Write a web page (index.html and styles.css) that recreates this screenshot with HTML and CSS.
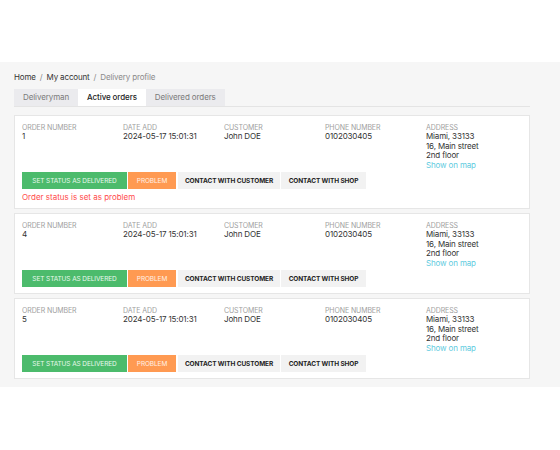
FILE: index.html
```html
<!DOCTYPE html>
<html>
<head>
<meta charset="utf-8">
<link rel="stylesheet" href="styles.css">
</head>
<body>
<div class="top"></div>
<main class="main">
  <nav class="crumbs">
    <a class="crumb">Home</a><span class="sep">/</span><a class="crumb">My account</a><span class="sep">/</span><span class="crumb current">Delivery profile</span>
  </nav>
  <div class="tabs">
    <div class="tab">Deliveryman</div>
    <div class="tab active">Active orders</div>
    <div class="tab">Delivered orders</div>
  </div>

  <section class="card">
    <div class="grid">
      <div class="col"><div class="lbl">Order number</div><div class="val">1</div></div>
      <div class="col"><div class="lbl">Date add</div><div class="val">2024-05-17 15:01:31</div></div>
      <div class="col"><div class="lbl">Customer</div><div class="val">John DOE</div></div>
      <div class="col"><div class="lbl">Phone number</div><div class="val">0102030405</div></div>
      <div class="col"><div class="lbl">Address</div><div class="val">Miami, 33133<br>16, Main street<br>2nd floor<br><a class="map">Show on map</a></div></div>
    </div>
    <div class="actions">
      <button class="btn green">Set status as delivered</button>
      <button class="btn orange">Problem</button>
      <button class="btn light customer">Contact with customer</button>
      <button class="btn light shop">Contact with shop</button>
    </div>
    <div class="err">Order status is set as problem</div>
  </section>

  <section class="card">
    <div class="grid">
      <div class="col"><div class="lbl">Order number</div><div class="val">4</div></div>
      <div class="col"><div class="lbl">Date add</div><div class="val">2024-05-17 15:01:31</div></div>
      <div class="col"><div class="lbl">Customer</div><div class="val">John DOE</div></div>
      <div class="col"><div class="lbl">Phone number</div><div class="val">0102030405</div></div>
      <div class="col"><div class="lbl">Address</div><div class="val">Miami, 33133<br>16, Main street<br>2nd floor<br><a class="map">Show on map</a></div></div>
    </div>
    <div class="actions">
      <button class="btn green">Set status as delivered</button>
      <button class="btn orange">Problem</button>
      <button class="btn light customer">Contact with customer</button>
      <button class="btn light shop">Contact with shop</button>
    </div>
  </section>

  <section class="card">
    <div class="grid">
      <div class="col"><div class="lbl">Order number</div><div class="val">5</div></div>
      <div class="col"><div class="lbl">Date add</div><div class="val">2024-05-17 15:01:31</div></div>
      <div class="col"><div class="lbl">Customer</div><div class="val">John DOE</div></div>
      <div class="col"><div class="lbl">Phone number</div><div class="val">0102030405</div></div>
      <div class="col"><div class="lbl">Address</div><div class="val">Miami, 33133<br>16, Main street<br>2nd floor<br><a class="map">Show on map</a></div></div>
    </div>
    <div class="actions">
      <button class="btn green">Set status as delivered</button>
      <button class="btn orange">Problem</button>
      <button class="btn light customer">Contact with customer</button>
      <button class="btn light shop">Contact with shop</button>
    </div>
  </section>
</main>
</body>
</html>
```
FILE: styles.css
```css
html, body {
  margin: 0;
  padding: 0;
  background: #fff;
  font-family: Inter, "Noto Sans", sans-serif;
  color: #333;
}
.top {
  height: 62px;
  background: #fff;
}
.main {
  background: #f6f6f6;
  padding: 10px 30px 8px 14px;
}
.crumbs {
  font-size: 8px;
  line-height: 10px;
  height: 10px;
  margin-bottom: 7px;
  letter-spacing: -0.15px;
}
.crumb { color: #333; }
.crumb.current { color: #8a8a8a; }
.sep { color: #8a8a8a; margin: 0 4px; }
.tabs {
  display: flex;
  border-bottom: 1px solid #e4e4e4;
  margin-bottom: 8px;
}
.tab {
  height: 17px;
  line-height: 17px;
  padding: 0 9px;
  font-size: 8px;
  color: #7a7a7a;
  background: #ebebee;
  letter-spacing: -0.1px;
}
.tab.active {
  background: #fff;
  color: #232323;
  font-weight: 500;
}
.card {
  background: #fff;
  border: 1px solid #e6e6e6;
  padding: 7px 7px 6px 7px;
  margin-bottom: 4px;
}
.card:last-child { margin-bottom: 0; }
.grid {
  display: grid;
  grid-template-columns: repeat(5, 101px);
}
.lbl {
  font-size: 7px;
  line-height: 9px;
  text-transform: uppercase;
  color: #a0a0a0;
  letter-spacing: -0.1px;
}
.val {
  font-size: 8px;
  line-height: 9.5px;
  color: #333;
  letter-spacing: -0.15px;
}
.map { color: #5fcbe0; }
.actions {
  display: flex;
  gap: 1px;
  margin-top: 2px;
}
.btn {
  border: 0;
  height: 17px;
  padding: 0;
  font-family: Inter, "Noto Sans", sans-serif;
  font-size: 6.5px;
  text-transform: uppercase;
  letter-spacing: -0.1px;
  white-space: nowrap;
  text-align: center;
  cursor: pointer;
}
.btn.green { background: #4cbb6c; color: #e8f8ec; width: 105px; }
.btn.orange { background: #ff9a52; color: #fff1e6; width: 48px; }
.btn.light { background: #f2f2f2; color: #232323; font-weight: 700; }
.btn.customer { width: 102px; margin-left: 1px; }
.btn.shop { width: 85px; }
.err {
  color: #ff4c4c;
  font-size: 8px;
  line-height: 10px;
  margin-top: 3px;
}
```
